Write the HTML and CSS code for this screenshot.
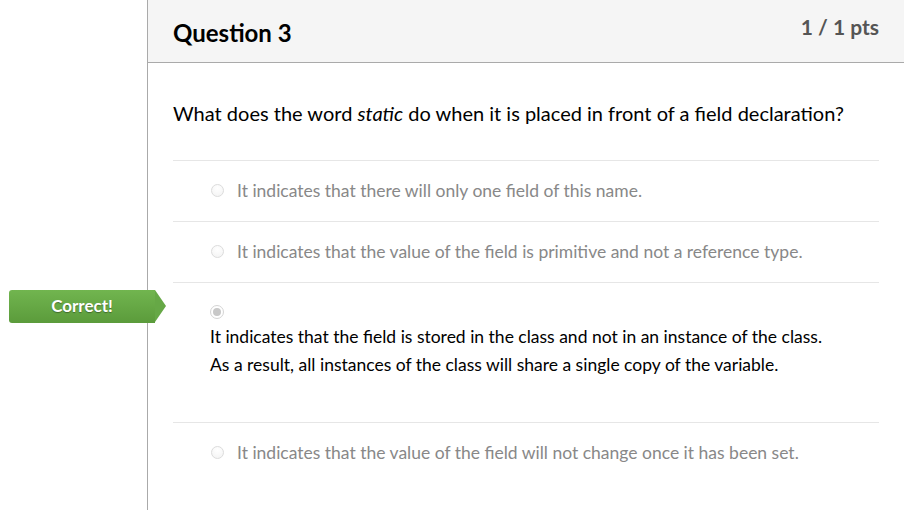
FILE: index.html
```html
<!DOCTYPE html>
<html>
<head>
<meta charset="utf-8">
<link rel="stylesheet" href="styles.css">
</head>
<body>
<div class="page">
  <div class="gutter"></div>
  <div class="question">
    <div class="q-header">
      <h2 class="q-title">Question 3</h2>
      <div class="q-pts">1 / 1 pts</div>
    </div>
    <div class="q-body">
      <p class="q-text">What does the word <em>static</em> do when it is placed in front of a field declaration?</p>
      <div class="answers">
        <div class="answer">
          <span class="radio"></span>
          <span class="a-text">It indicates that there will only one field of this name.</span>
        </div>
        <div class="answer">
          <span class="radio"></span>
          <span class="a-text">It indicates that the value of the field is primitive and not a reference type.</span>
        </div>
        <div class="answer answer-selected">
          <div class="badge">Correct!</div>
          <span class="radio radio-checked"></span>
          <div class="a-text-selected">It indicates that the field is stored in the class and not in an instance of the class.<br>As a result, all instances of the class will share a single copy of the variable.</div>
        </div>
        <div class="answer">
          <span class="radio"></span>
          <span class="a-text">It indicates that the value of the field will not change once it has been set.</span>
        </div>
      </div>
    </div>
  </div>
</div>
</body>
</html>
```
FILE: styles.css
```css
html, body {
  margin: 0;
  padding: 0;
  background: #fff;
}
body {
  font-family: Lato, "Open Sans", sans-serif;
  color: #2d3b45;
  width: 904px;
  height: 510px;
  overflow: hidden;
}
.page {
  display: flex;
  height: 510px;
}
.gutter {
  width: 147px;
  flex: none;
}
.question {
  flex: 1;
  border-left: 1px solid #aaaaaa;
}
.q-header {
  height: 63px;
  box-sizing: border-box;
  background: #f5f5f5;
  border-bottom: 1px solid #aaaaaa;
  padding: 0 25px;
  display: flex;
  justify-content: space-between;
}
.q-title {
  margin: 0;
  padding-top: 18px;
  font-size: 24px;
  font-weight: 700;
  line-height: 30px;
  color: #000;
}
.q-pts {
  padding-top: 13px;
  font-size: 21px;
  font-weight: 700;
  line-height: 28px;
  color: #555;
}
.q-body {
  padding: 0 25px;
}
.q-text {
  margin: 0;
  padding-top: 38px;
  padding-bottom: 35px;
  font-size: 20px;
  line-height: 24px;
  color: #000;
}
.answers {
  display: flex;
  flex-direction: column;
}
.answer {
  position: relative;
  border-top: 1px solid #e6e6e6;
  display: flex;
  align-items: center;
  gap: 13px;
  padding: 19px 37px 20px;
  font-size: 17.5px;
  line-height: 21px;
  color: #888;
}
.answer-selected {
  flex-direction: column;
  align-items: flex-start;
  gap: 0;
  padding: 22px 37px 43px;
  color: #000;
}
.radio {
  width: 13px;
  height: 13px;
  box-sizing: border-box;
  border-radius: 50%;
  border: 1px solid #dcdcdc;
  background: radial-gradient(circle at 50% 30%, #ffffff, #f2f2f2);
  flex: none;
  position: relative;
  margin-left: 1px;
}
.radio-checked {
  width: 14px;
  height: 14px;
  margin-left: 0;
  border: 1px solid #d4d4d4;
  background: #fff;
}
.radio-checked::after {
  content: "";
  position: absolute;
  left: 2px;
  top: 2px;
  width: 8px;
  height: 8px;
  border-radius: 50%;
  background: #c8c8c8;
}
.a-text-selected {
  margin-top: 4px;
  line-height: 28px;
  color: #000;
}
.badge {
  position: absolute;
  left: -164px;
  top: 7px;
  width: 146px;
  height: 33px;
  box-sizing: border-box;
  background: linear-gradient(#71b54f, #5b9b3b);
  border-radius: 3px 0 0 3px;
  color: #fff;
  font-weight: 700;
  font-size: 17px;
  line-height: 31px;
  text-align: center;
  text-shadow: 0 1px 1px rgba(0,0,0,0.35);
}
.badge::after {
  content: "";
  position: absolute;
  right: -11px;
  top: 0;
  width: 0;
  height: 0;
  border-top: 16.5px solid transparent;
  border-bottom: 16.5px solid transparent;
  border-left: 11px solid #66a846;
}
```
